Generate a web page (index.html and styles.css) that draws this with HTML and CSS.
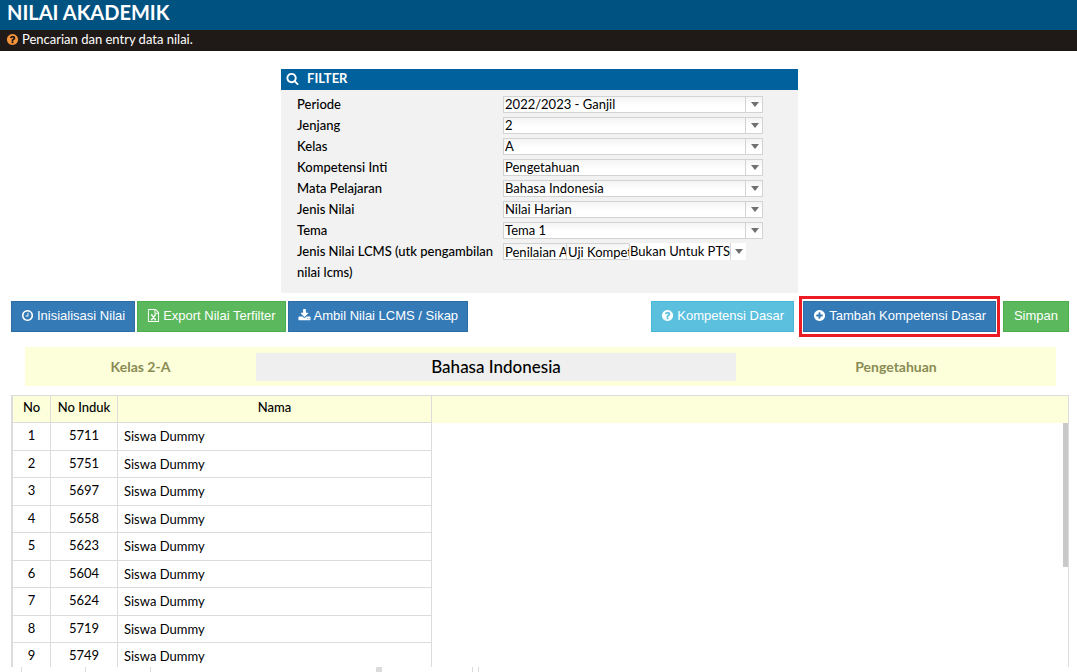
FILE: index.html
```html
<!DOCTYPE html>
<html lang="id">
<head>
<meta charset="utf-8">
<title>Nilai Akademik</title>
<link rel="stylesheet" href="styles.css">
</head>
<body>
<svg class="defs" aria-hidden="true">
  <symbol id="search" viewBox="0 0 1792 1792"><path d="M1216 832q0-185-131.500-316.500t-316.500-131.500-316.500 131.500-131.500 316.500 131.500 316.500 316.500 131.500 316.500-131.500 131.500-316.500zm512 832q0 52-38 90t-90 38q-54 0-90-38l-343-342q-179 124-399 124-143 0-273.500-55.500t-225-150-150-225-55.500-273.500 55.500-273.500 150-225 225-150 273.500-55.500 273.500 55.500 225 150 150 225 55.500 273.500q0 220-124 399l343 343q37 37 37 90z"/></symbol>
  <symbol id="question" viewBox="0 0 1792 1792"><path d="M1024 1376v-192q0-14-9-23t-23-9h-192q-14 0-23 9t-9 23v192q0 14 9 23t23 9h192q14 0 23-9t9-23zm256-672q0-88-55.500-163t-138.500-116-170-41q-243 0-371 213-15 24 8 42l132 100q7 6 19 6 16 0 25-12 53-68 86-92 34-24 86-24 48 0 85.500 26t37.500 59q0 38-20 61t-68 45q-63 28-115.500 86.500t-52.500 125.500v36q0 14 9 23t23 9h192q14 0 23-9t9-23q0-19 21.500-49.500t54.500-49.500q32-18 49-28.500t46-35 44.500-48 28-60.500 12.500-81zm384 192q0 209-103 385.500t-279.500 279.500-385.500 103-385.500-103-279.500-279.500-103-385.500 103-385.500 279.500-279.500 385.500-103 385.500 103 279.500 279.500 103 385.500z"/></symbol>
  <symbol id="plus" viewBox="0 0 1792 1792"><path d="M1344 960v-128q0-26-19-45t-45-19h-256v-256q0-26-19-45t-45-19h-128q-26 0-45 19t-19 45v256h-256q-26 0-45 19t-19 45v128q0 26 19 45t45 19h256v256q0 26 19 45t45 19h128q26 0 45-19t19-45v-256h256q26 0 45-19t19-45zm320-64q0 209-103 385.500t-279.500 279.500-385.500 103-385.500-103-279.500-279.500-103-385.500 103-385.500 279.500-279.500 385.500-103 385.500 103 279.500 279.500 103 385.500z"/></symbol>
  <symbol id="clock" viewBox="0 0 1792 1792"><path d="M1024 544v448q0 14-9 23t-23 9h-320q-14 0-23-9t-9-23v-64q0-14 9-23t23-9h224v-352q0-14 9-23t23-9h64q14 0 23 9t9 23zm416 352q0-148-73-273t-198-198-273-73-273 73-198 198-73 273 73 273 198 198 273 73 273-73 198-198 73-273zm224 0q0 209-103 385.500t-279.500 279.500-385.500 103-385.500-103-279.500-279.500-103-385.500 103-385.500 279.500-279.500 385.500-103 385.500 103 279.500 279.500 103 385.500z"/></symbol>
  <symbol id="download" viewBox="0 0 1792 1792"><path d="M1344 1344q0-26-19-45t-45-19-45 19-19 45 19 45 45 19 45-19 19-45zm256 0q0-26-19-45t-45-19-45 19-19 45 19 45 45 19 45-19 19-45zm128-224v320q0 40-28 68t-68 28h-1472q-40 0-68-28t-28-68v-320q0-40 28-68t68-28h465l135 136q58 56 136 56t136-56l136-136h464q40 0 68 28t28 68zm-325-569q17 41-14 70l-448 448q-18 19-45 19t-45-19l-448-448q-31-29-14-70 17-39 59-39h256v-448q0-26 19-45t45-19h256q26 0 45 19t19 45v448h256q42 0 59 39z"/></symbol>
  <symbol id="excel" viewBox="0 0 1792 1792"><path d="M1596 380q28 28 48 76t20 88v1152q0 40-28 68t-68 28h-1344q-40 0-68-28t-28-68v-1600q0-40 28-68t68-28h896q40 0 88 20t76 48zm-444-244v376h376q-10-29-22-41l-313-313q-12-12-41-22zm384 1528v-1024h-416q-40 0-68-28t-28-68v-416h-768v1536h1280z"/><path d="M620 820L1160 1480M1160 820L620 1480M540 820h230M1020 820h230M540 1480h230M1020 1480h230" fill="none" stroke="currentColor" stroke-width="170"/></symbol>
</svg>

<header class="title"><h1>NILAI AKADEMIK</h1></header>
<p class="hint"><svg class="icon hint-icon"><use href="#question"/></svg>Pencarian dan entry data nilai.</p>

<form class="filter">
  <h2 class="filter-head"><svg class="icon"><use href="#search"/></svg>FILTER</h2>
  <div class="filter-body">
    <div class="field"><label for="periode">Periode</label><span class="combo"><select id="periode"><option>2022/2023 - Ganjil</option></select></span></div>
    <div class="field"><label for="jenjang">Jenjang</label><span class="combo"><select id="jenjang"><option>2</option></select></span></div>
    <div class="field"><label for="kelas">Kelas</label><span class="combo"><select id="kelas"><option>A</option></select></span></div>
    <div class="field"><label for="ki">Kompetensi Inti</label><span class="combo"><select id="ki"><option>Pengetahuan</option></select></span></div>
    <div class="field"><label for="mapel">Mata Pelajaran</label><span class="combo"><select id="mapel"><option>Bahasa Indonesia</option></select></span></div>
    <div class="field"><label for="jenis">Jenis Nilai</label><span class="combo"><select id="jenis"><option>Nilai Harian</option></select></span></div>
    <div class="field"><label for="tema">Tema</label><span class="combo"><select id="tema"><option>Tema 1</option></select></span></div>
    <div class="field"><label for="lcms">Jenis Nilai LCMS (utk pengambilan nilai lcms)</label>
      <span class="trio">
        <input class="part" id="lcms" value="Penilaian Awal">
        <input class="part" aria-label="Uji Kompetensi" value="Uji Kompetensi">
        <span class="combo combo-last"><select aria-label="Untuk PTS"><option>Bukan Untuk PTS</option></select></span>
      </span>
    </div>
  </div>
</form>

<div class="toolbar">
  <div class="group">
    <button class="btn blue"><svg class="icon"><use href="#clock"/></svg>Inisialisasi Nilai</button>
    <button class="btn green"><svg class="icon"><use href="#excel"/></svg>Export Nilai Terfilter</button>
    <button class="btn blue"><svg class="icon"><use href="#download"/></svg>Ambil Nilai LCMS / Sikap</button>
  </div>
  <div class="group">
    <button class="btn cyan"><svg class="icon"><use href="#question"/></svg>Kompetensi Dasar</button>
    <span class="marked"><button class="btn blue"><svg class="icon"><use href="#plus"/></svg>Tambah Kompetensi Dasar</button></span>
    <button class="btn green save">Simpan</button>
  </div>
</div>

<section class="band">
  <span>Kelas 2-A</span>
  <button class="subject">Bahasa Indonesia</button>
  <span>Pengetahuan</span>
</section>

<main class="sheet">
  <table>
    <thead><tr><th class="no">No</th><th class="induk">No Induk</th><th class="nama">Nama</th><th class="rest"></th></tr></thead>
    <tbody>
      <tr><td>1</td><td>5711</td><td>Siswa Dummy</td></tr>
      <tr><td>2</td><td>5751</td><td>Siswa Dummy</td></tr>
      <tr><td>3</td><td>5697</td><td>Siswa Dummy</td></tr>
      <tr><td>4</td><td>5658</td><td>Siswa Dummy</td></tr>
      <tr><td>5</td><td>5623</td><td>Siswa Dummy</td></tr>
      <tr><td>6</td><td>5604</td><td>Siswa Dummy</td></tr>
      <tr><td>7</td><td>5624</td><td>Siswa Dummy</td></tr>
      <tr><td>8</td><td>5719</td><td>Siswa Dummy</td></tr>
      <tr><td>9</td><td>5749</td><td>Siswa Dummy</td></tr>
    </tbody>
  </table>
  <div class="thumb"></div>
</main>
<div class="strip"><i></i><i></i><i></i><i class="wide"></i><i></i><i></i></div>
</body>
</html>
```
FILE: styles.css
```css
* { box-sizing: border-box; }
body {
  margin: 0;
  height: 100vh;
  overflow: hidden;
  display: flex;
  flex-direction: column;
  background: #fff;
  color: #000;
  font: 13px/21px Lato, "Open Sans", sans-serif;
}
h1, h2, p { margin: 0; }
.defs { position: absolute; width: 0; height: 0; }
.icon { width: 13px; height: 13px; fill: currentColor; flex: none; }

.title { flex: none; height: 30px; padding: 0 7px; background: #005281; color: #fff; }
.title h1 { font-size: 20px; line-height: 25px; font-weight: 700; }
.hint {
  flex: none;
  display: flex;
  align-items: center;
  gap: 3px;
  height: 21px;
  padding: 0 6px 2px;
  background: #1f1a17;
  color: #fff;
}
.hint-icon { color: #f7943c; }

.filter { flex: none; width: 48%; margin: 18px 279px 0 auto; background: #f2f2f2; }
.filter-head {
  display: flex;
  align-items: center;
  gap: 8px;
  height: 21px;
  padding: 0 5px 2px;
  background: #00619c;
  color: #fff;
  font-size: 13px;
  font-weight: 700;
}
.filter-body { padding: 4px 16px 10px; }
.field { display: grid; grid-template-columns: 206px 1fr; align-items: start; }
.field label { font-weight: 500; line-height: 21px; }
.combo { position: relative; display: block; width: 260px; height: 17px; margin-top: 2px; }
.combo::before {
  content: "";
  position: absolute;
  top: 0;
  right: 0;
  width: 17px;
  height: 17px;
  border-left: 1px solid #d3d3d3;
  pointer-events: none;
}
.combo::after {
  content: "";
  position: absolute;
  top: 6px;
  right: 4px;
  border: 4px solid transparent;
  border-top: 5px solid #707070;
  border-bottom: 0;
  pointer-events: none;
}
select, .part {
  appearance: none;
  display: block;
  width: 100%;
  height: 17px;
  margin: 0;
  padding: 0 0 0 1px;
  border: 1px solid #d3d3d3;
  border-radius: 0;
  outline: 0;
  background: linear-gradient(#f4f4f4, #fff 60%);
  color: #000;
  font: 13px/15px Lato, "Open Sans", sans-serif;
}
.trio { display: flex; margin-top: 2px; }
.part { width: 63px; border-right: 0; flex: none; }
.combo-last { width: 117px; margin: 0; }
.combo-last::before { width: 15px; }
.combo-last::after { right: 3px; }
.combo-last select { padding: 0; border-right: 0; border-color: #fff; border-left-color: #d3d3d3; background: #fff; }

.toolbar { flex: none; display: flex; justify-content: space-between; margin: 3px 8px 0 11px; height: 41px; }
.group { display: flex; align-items: center; gap: 2px; }
.btn {
  display: flex;
  align-items: center;
  justify-content: center;
  gap: 3px;
  height: 31px;
  padding: 0 9px 2px;
  border: 1px solid;
  border-radius: 0;
  color: #fff;
  font: 13px/18px "Liberation Sans", Arial, sans-serif;
  white-space: nowrap;
}
.save { min-width: 66px; }
.blue { background: #337ab7; border-color: #2e6da4; }
.green { background: #5cb85c; border-color: #4cae4c; }
.cyan { background: #5bc0de; border-color: #46b8da; }
.marked { margin: 0 1px 0 3px; padding: 2px 1px; border: 3px solid #ed1c24; height: 41px; }

.band {
  flex: none;
  display: grid;
  grid-template-columns: 231fr 480fr 320fr;
  align-items: center;
  height: 39px;
  margin: 10px 21px 0 25px;
  background: #fcffd9;
  color: #8a8b55;
  font-size: 14px;
  font-weight: 700;
  text-align: center;
}
.subject {
  height: 28px;
  padding: 0;
  border: 0;
  background: #efefef;
  color: #000;
  font: 500 17px/28px Lato, "Open Sans", sans-serif;
}

.sheet {
  position: relative;
  flex: 1;
  min-height: 0;
  overflow: hidden;
  margin: 9px 8px 0 11px;
  border: 1px solid #dcdcdc;
  border-left-width: 2px;
  border-bottom: 0;
}
table { width: 100%; border-collapse: separate; border-spacing: 0; table-layout: fixed; }
th, td { padding: 0; border-right: 1px solid #dcdcdc; border-bottom: 1px solid #dcdcdc; line-height: 21px; vertical-align: top; text-align: center; }
th { height: 27px; padding-top: 1px; background: #fcffd9; font-weight: 500; }
td { height: 27px; padding-top: 2px; }
tr:nth-child(odd) td { height: 28px; }
td:nth-child(3) { padding: 3px 0 0 6px; text-align: left; }
.no { width: 38px; }
.induk { width: 67px; }
.nama { width: 314px; }
.rest { border: 0; }
.thumb { position: absolute; top: 27px; right: 0; width: 5px; height: 144px; background: #c9c9c9; }
.strip { flex: none; display: grid; grid-template-columns: 64px 65px 226px 96px 6px 1px; height: 5px; margin-left: 21px; }
.strip i { width: 1px; height: 5px; background: #dcdcdc; }
.strip .wide { width: 6px; }
```
